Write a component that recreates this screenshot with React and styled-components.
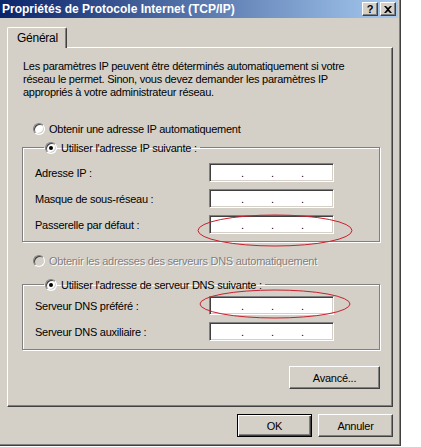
import React from 'react'
import styled, { createGlobalStyle } from 'styled-components'

const GlobalStyle = createGlobalStyle`
  body {
    margin: 0;
    background: #fff;
    font-family: "Liberation Sans", Arial, sans-serif;
    font-size: 11px;
    letter-spacing: -0.25px;
    color: #000;
  }
`;

const Window = styled.div`
  width: 401px;
  height: 446px;
  box-sizing: border-box;
  padding: 0 3px 3px 0;
  background: #d4d0c8;
  box-shadow: inset -1px -1px 0 #404040, inset -2px -2px 0 #808080;
  display: flex;
  flex-direction: column;
`;

const TitleBar = styled.div`
  height: 18px;
  display: flex;
  align-items: center;
  justify-content: space-between;
  padding: 0 2px 0 2px;
  background: linear-gradient(to right, #0a246a, #a6caf0);
`;

const Title = styled.div`
  color: #fff;
  font-weight: bold;
  font-size: 12px;
  letter-spacing: 0;
`;

const CapButtons = styled.div`
  display: flex;
  gap: 2px;
`;

const CapButton = styled.div`
  width: 16px;
  height: 14px;
  box-sizing: border-box;
  background: #d4d0c8;
  border: 1px solid;
  border-color: #fff #404040 #404040 #fff;
  box-shadow: inset -1px -1px 0 #808080;
  display: flex;
  align-items: center;
  justify-content: center;
  font-weight: bold;
  font-size: 11px;
  letter-spacing: 0;
  line-height: 1;
`;

const Body = styled.div`
  flex: 1;
  display: flex;
  flex-direction: column;
  padding: 9px 5px 0 7px;
`;

const TabStrip = styled.div`
  display: flex;
  position: relative;
  z-index: 1;
  margin-bottom: -1px;
`;

const Tab = styled.div`
  height: 21px;
  box-sizing: border-box;
  padding: 0 8px 0 9px;
  display: flex;
  align-items: center;
  background: #d4d0c8;
  border-top: 1px solid #fff;
  border-left: 1px solid #fff;
  border-right: 1px solid #404040;
  box-shadow: inset -1px 0 0 #808080;
  border-radius: 2px 2px 0 0;
  font-size: 12px;
`;

const Panel = styled.div`
  height: 360px;
  box-sizing: border-box;
  display: flex;
  flex-direction: column;
  padding: 12px 12px 0 14px;
  border-top: 1px solid #fff;
  border-left: 1px solid #fff;
  border-right: 1px solid #404040;
  border-bottom: 1px solid #404040;
  box-shadow: inset -1px -1px 0 #808080;
`;

const Intro = styled.p`
  margin: 0 0 0 1px;
  line-height: 13px;
`;

const RadioRow = styled.label`
  display: flex;
  align-items: center;
  gap: 4px;
  height: 13px;
  margin-top: ${p => p.$top}px;
  padding-left: ${p => p.$indent}px;
  color: ${p => (p.$disabled ? '#808080' : '#000')};
  text-shadow: ${p => (p.$disabled ? '1px 1px 0 #fff' : 'none')};
`;

const Radio = styled.span`
  width: 12px;
  height: 12px;
  box-sizing: border-box;
  border-radius: 50%;
  background: ${p => (p.$disabled ? '#d4d0c8' : '#fff')};
  border: 1px solid;
  border-color: #808080 #fff #fff #808080;
  box-shadow: inset 1px 1px 0 #404040, inset -1px -1px 0 #d4d0c8;
  display: flex;
  align-items: center;
  justify-content: center;
  flex-shrink: 0;

  &::after {
    content: '';
    display: ${p => (p.$checked ? 'block' : 'none')};
    width: 4px;
    height: 4px;
    border-radius: 50%;
    background: #000;
  }
`;

const Group = styled.fieldset`
  margin: ${p => p.$top}px 0 0 0;
  padding: ${p => p.$padTop}px 0 ${p => p.$padBottom}px 12px;
  border: 1px solid #808080;
  box-shadow: 1px 1px 0 #fff, inset 1px 1px 0 #fff;
  display: flex;
  flex-direction: column;
  gap: 7px;
  min-width: 0;
`;

const Legend = styled.legend`
  margin-left: 9px;
  padding: 0 3px 0 1px;
  display: flex;
  align-items: center;
  gap: 4px;
  height: 13px;
`;

const FieldRow = styled.div`
  display: flex;
  align-items: center;
  height: 19px;
`;

const FieldLabel = styled.span`
  width: 174px;
`;

const FieldWrap = styled.div`
  position: relative;
`;

const IpField = styled.div`
  width: 125px;
  height: 19px;
  box-sizing: border-box;
  background: #fff;
  border: 1px solid;
  border-color: #808080 #fff #fff #808080;
  box-shadow: inset 1px 1px 0 #404040, inset -1px -1px 0 #d4d0c8;
  display: flex;
  align-items: flex-end;
  padding: 0 0 2px 31px;
  line-height: 11px;
`;

const Dot = styled.span`
  width: 30px;
`;

const Mark = styled.svg`
  position: absolute;
  pointer-events: none;
  overflow: visible;
`;

const ButtonRow = styled.div`
  display: flex;
  justify-content: flex-end;
  gap: 6px;
  margin-top: ${p => p.$top}px;
`;

const Button = styled.div`
  width: ${p => p.$w}px;
  height: 23px;
  box-sizing: border-box;
  display: flex;
  align-items: center;
  justify-content: center;
  background: #d4d0c8;
  border: 1px solid;
  border-color: ${p => (p.$default ? '#000' : '#fff #404040 #404040 #fff')};
  box-shadow: ${p =>
    p.$default
      ? 'inset 1px 1px 0 #fff, inset -1px -1px 0 #404040, inset -2px -2px 0 #808080'
      : 'inset -1px -1px 0 #808080'};
`;

function Ip({ mark }) {
  return (
    <FieldWrap>
      <IpField>
        <Dot>.</Dot>
        <Dot>.</Dot>
        <Dot>.</Dot>
      </IpField>
      {mark && (
        <Mark
          width={mark.w}
          height={mark.h}
          style={{ left: mark.x, top: mark.y }}
        >
          <ellipse
            cx={mark.w / 2}
            cy={mark.h / 2}
            rx={mark.w / 2}
            ry={mark.h / 2}
            fill="none"
            stroke="#c8202c"
            strokeWidth="1"
          />
        </Mark>
      )}
    </FieldWrap>
  );
}

export default function App() {
  return (
    <>
      <GlobalStyle />
      <Window>
        <TitleBar>
          <Title>Propriétés de Protocole Internet (TCP/IP)</Title>
          <CapButtons>
            <CapButton>?</CapButton>
            <CapButton>
              <svg width="8" height="7" viewBox="0 0 8 7">
                <path d="M0 0h2l2 2 2-2h2L5 3.5 8 7H6L4 5 2 7H0l3-3.5z" fill="#000" />
              </svg>
            </CapButton>
          </CapButtons>
        </TitleBar>
        <Body>
          <TabStrip>
            <Tab>Général</Tab>
          </TabStrip>
          <Panel>
            <Intro>
              Les paramètres IP peuvent être déterminés automatiquement si votre
              <br />
              réseau le permet. Sinon, vous devez demander les paramètres IP
              <br />
              appropriés à votre administrateur réseau.
            </Intro>

            <RadioRow $top={23} $indent={11}>
              <Radio />
              Obtenir une adresse IP automatiquement
            </RadioRow>

            <Group $top={6} $padTop={9} $padBottom={7}>
              <Legend>
                <Radio $checked />
                Utiliser l'adresse IP suivante :
              </Legend>
              <FieldRow>
                <FieldLabel>Adresse IP :</FieldLabel>
                <Ip />
              </FieldRow>
              <FieldRow>
                <FieldLabel>Masque de sous-réseau :</FieldLabel>
                <Ip />
              </FieldRow>
              <FieldRow>
                <FieldLabel>Passerelle par défaut :</FieldLabel>
                <Ip mark={{ x: -11, y: 0, w: 154, h: 31 }} />
              </FieldRow>
            </Group>

            <RadioRow $top={12} $indent={11} $disabled>
              <Radio $disabled />
              Obtenir les adresses des serveurs DNS automatiquement
            </RadioRow>

            <Group $top={11} $padTop={5} $padBottom={8}>
              <Legend>
                <Radio $checked />
                Utiliser l'adresse de serveur DNS suivante :
              </Legend>
              <FieldRow>
                <FieldLabel>Serveur DNS préféré :</FieldLabel>
                <Ip mark={{ x: -9, y: -6, w: 150, h: 28 }} />
              </FieldRow>
              <FieldRow>
                <FieldLabel>Serveur DNS auxiliaire :</FieldLabel>
                <Ip />
              </FieldRow>
            </Group>

            <ButtonRow $top={16}>
              <Button $w={91}>Avancé...</Button>
            </ButtonRow>
          </Panel>
          <ButtonRow $top={7}>
            <Button $w={75} $default>OK</Button>
            <Button $w={75}>Annuler</Button>
          </ButtonRow>
        </Body>
      </Window>
    </>
  );
}
